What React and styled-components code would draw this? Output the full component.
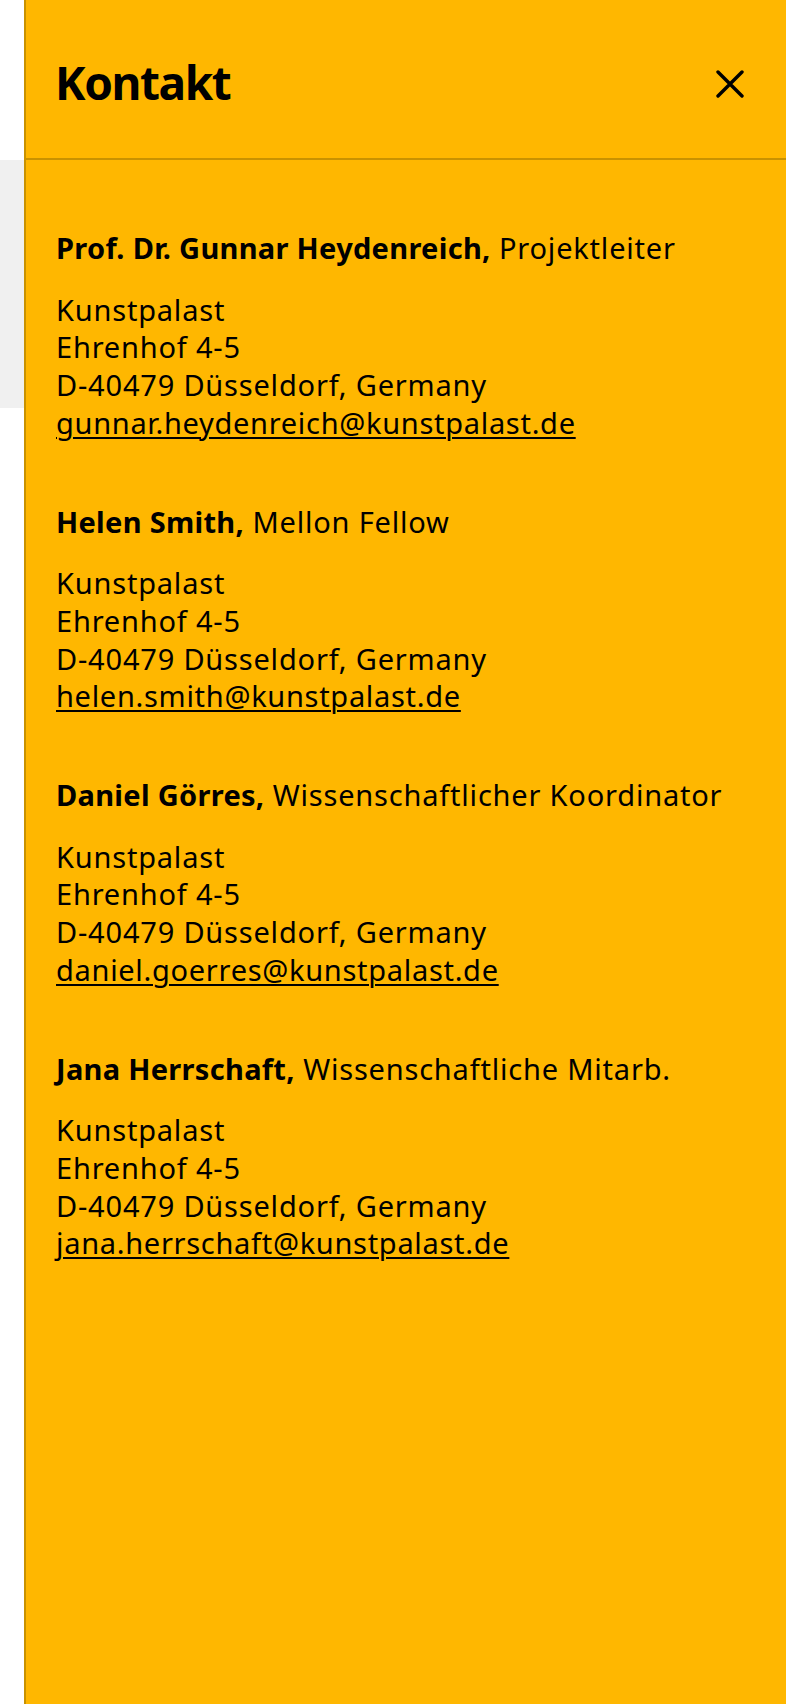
import React from 'react';
import styled, {createGlobalStyle} from 'styled-components';

const GlobalStyle = createGlobalStyle`
  html, body {
    margin: 0;
    padding: 0;
    background: #ffffff;
  }
  body {
    font-family: "Noto Sans", "Liberation Sans", sans-serif;
    color: #000;
  }
`

const Page = styled.div`
  display: flex;
  width: 786px;
  min-height: 1704px;
`

const Backdrop = styled.div`
  width: 24px;
  flex-shrink: 0;
  background: #ffffff;
  padding-top: 160px;
`

const BackdropBlock = styled.div`
  height: 248px;
  background: #f0f0f0;
`

const Drawer = styled.aside`
  flex: 1;
  display: flex;
  flex-direction: column;
  background: #ffb700;
  border-left: 2px solid #c99200;
`

const Header = styled.header`
  height: 160px;
  box-sizing: border-box;
  display: flex;
  align-items: center;
  justify-content: space-between;
  padding: 0 42px 0 29px;
  border-bottom: 2px solid #c99200;
`

const Title = styled.h2`
  margin: 6px 0 0;
  font-size: 46px;
  font-weight: 700;
  line-height: 1;
  letter-spacing: -1.4px;
`

const CloseButton = styled.button`
  width: 28px;
  height: 28px;
  margin-top: 9px;
  padding: 0;
  border: none;
  background: none;
  cursor: pointer;
  svg {
    display: block;
  }
`

const Content = styled.div`
  padding: 69px 30px 0;
  font-size: 29px;
  line-height: 37.7px;
  letter-spacing: 0.8px;
`

const Person = styled.div`
  margin-bottom: 61px;
`

const Name = styled.p`
  margin: 0 0 24px;
  strong {
    font-weight: 700;
    letter-spacing: 0.3px;
  }
`

const Address = styled.p`
  margin: 0;
  a {
    color: #000;
    letter-spacing: 0.7px;
    text-decoration: underline;
    text-underline-offset: 3px;
    text-decoration-thickness: 2px;
  }
`

const people = [
  {name: 'Prof. Dr. Gunnar Heydenreich', role: 'Projektleiter', mail: 'gunnar.heydenreich@kunstpalast.de'},
  {name: 'Helen Smith', role: 'Mellon Fellow', mail: 'helen.smith@kunstpalast.de'},
  {name: 'Daniel Görres', role: 'Wissenschaftlicher Koordinator', mail: 'daniel.goerres@kunstpalast.de'},
  {name: 'Jana Herrschaft', role: 'Wissenschaftliche Mitarb.', mail: 'jana.herrschaft@kunstpalast.de'},
]

function App() {
  return (
    <Page>
      <GlobalStyle />
      <Backdrop>
        <BackdropBlock />
      </Backdrop>
      <Drawer>
        <Header>
          <Title>Kontakt</Title>
          <CloseButton aria-label="Schließen">
            <svg width="28" height="28" viewBox="0 0 28 28">
              <path d="M2 2 L26 26 M26 2 L2 26" stroke="#000" strokeWidth="3.4" strokeLinecap="round" />
            </svg>
          </CloseButton>
        </Header>
        <Content>
          {people.map((p) => (
            <Person key={p.mail}>
              <Name><strong>{p.name},</strong> {p.role}</Name>
              <Address>
                Kunstpalast<br />
                Ehrenhof 4-5<br />
                D-40479 Düsseldorf, Germany<br />
                <a href={'mailto:' + p.mail}>{p.mail}</a>
              </Address>
            </Person>
          ))}
        </Content>
      </Drawer>
    </Page>
  );
}

export default App;
